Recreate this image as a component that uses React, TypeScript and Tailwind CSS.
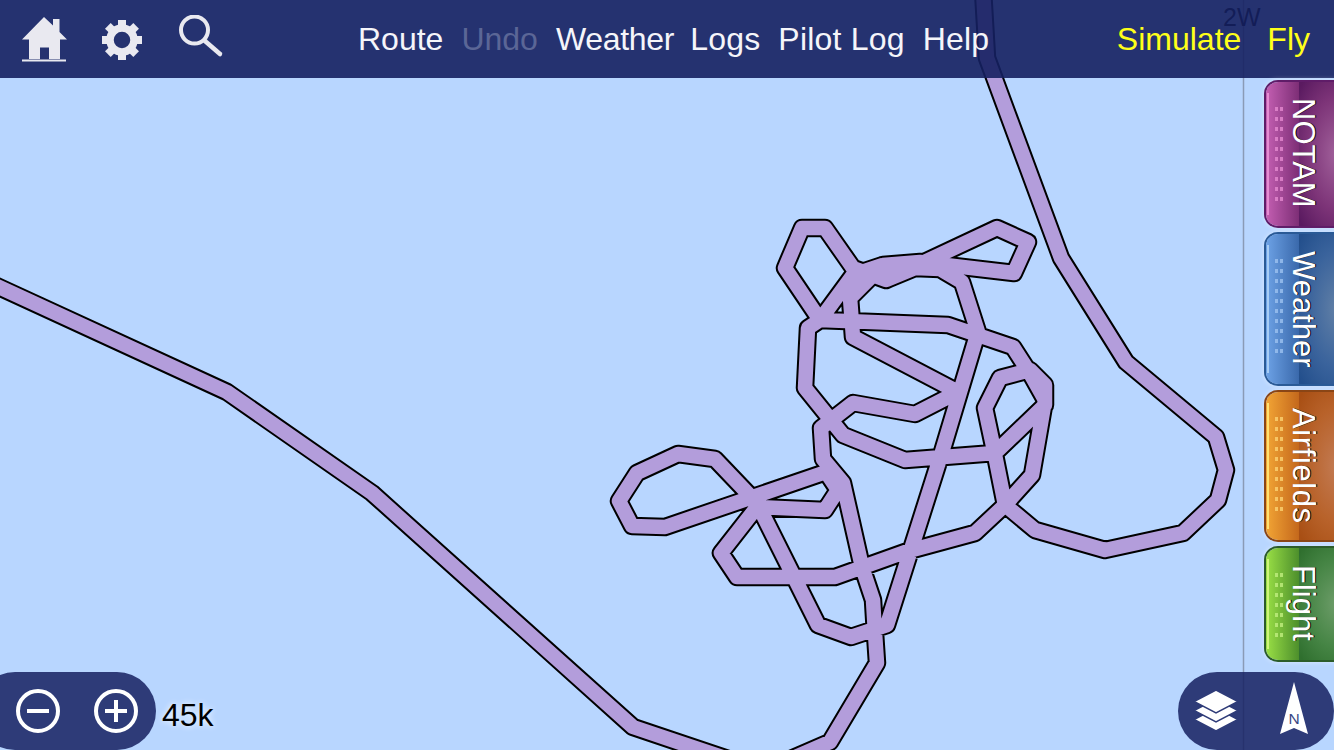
const routeD =
  "M-10 283 L227 392 L372 493 L633 727 L740 763 L770 768 L830 742 L877 663 L875 633 L873 600 L862 567 L843 483 L823 459 L821 428 L853 403 L915 414 L958 392 L853 337 L850 298 L883 265 L920 262 L1014 273 L1028 242 L997 228 L886 280 L853 268 L825 228 L802 228 L785 268 L820 320 L948 325 L1013 347 L1031 375 L1045 400 L1032 475 L1005 505 L975 533 L905 552 L835 577 L737 577 L721 553 L757 507 L825 510 L838 490 L826 472 L665 527 L632 526 L619 501 L637 473 L678 454 L715 459 L757 503 L818 625 L851 637 L887 625 L942 452 L978 332 L962 282 L940 269 L915 268 L886 280 " +
  "M820 320 L808 328 L805 388 L843 435 L905 460 L995 453 L1045 405 L1045 385 L1030 370 L1000 378 L985 408 L995 455 L1005 505 L1035 530 L1105 550 L1183 533 L1218 500 L1226 470 L1216 437 L1126 362 L1061 258 L987 58 L983 -10 M820 320 L853 275 L883 265";

const menu = [
  { label: "Route", cls: "text-[#f5f5fa]" },
  { label: "Undo", cls: "text-[#5b6696]" },
  { label: "Weather", cls: "-mr-[2px] tracking-[-0.3px] text-[#f5f5fa]" },
  { label: "Logs", cls: "tracking-[0.2px] text-[#f5f5fa]" },
  { label: "Pilot Log", cls: "tracking-[0.2px] text-[#f5f5fa]" },
  { label: "Help", cls: "tracking-[0.2px] text-[#f5f5fa]" },
];

const tabs = [
  {
    label: "NOTAM",
    h: "h-[148px]",
    rows: 10,
    text: "pb-[3px]",
    border: "border-[#5f1c68]",
    left: "bg-gradient-to-r from-[#c45fb2] to-[#7d2e76]",
    right: "bg-[radial-gradient(ellipse_at_right,#a0609a_0%,#7d3478_55%,#5a1a60_95%)]",
    strip: "bg-[#e58cd2]",
    dot: "bg-[#e58ad0]",
  },
  {
    label: "Weather",
    h: "h-[154px]",
    rows: 10,
    text: "",
    border: "border-[#2a5a96]",
    left: "bg-gradient-to-r from-[#6da2e6] to-[#3a69ab]",
    right: "bg-[radial-gradient(ellipse_at_right,#607fa6_0%,#3a639c_55%,#234f8c_95%)]",
    strip: "bg-[#a8cdf5]",
    dot: "bg-[#9cc2f0]",
  },
  {
    label: "Airfields",
    h: "h-[152px]",
    rows: 10,
    text: "tracking-[0.6px]",
    border: "border-[#8a4515]",
    left: "bg-gradient-to-r from-[#f2a535] to-[#c4681c]",
    right: "bg-[radial-gradient(ellipse_at_right,#c27a52_0%,#b8622a_55%,#a84f14_95%)]",
    strip: "bg-[#ffe070]",
    dot: "bg-[#fbd272]",
  },
  {
    label: "Flight",
    h: "h-[116px]",
    rows: 7,
    text: "pb-[3px]",
    border: "border-[#2c5c2a]",
    left: "bg-gradient-to-r from-[#9ae045] to-[#4d8f2c]",
    right: "bg-[radial-gradient(ellipse_at_right,#6c9c68_0%,#468545_55%,#2f6f2e_95%)]",
    strip: "bg-[#d0f57a]",
    dot: "bg-[#c0ee80]",
  },
];

function HomeIcon() {
  return (
    <svg width="46" height="46" viewBox="0 0 46 46" fill="#e9e9f0">
      <path d="M22 0 L31 8.5 V2 H37.5 V15 L45 22.5 H38 V42 H27 V30.5 H18 V42 H7 V22.5 H0 Z" />
      <rect x="0" y="42.5" width="44" height="2" />
    </svg>
  );
}

function GearIcon() {
  const teeth = [0, 45, 90, 135, 180, 225, 270, 315];
  return (
    <svg width="42" height="42" viewBox="-21 -21 42 42" fill="#e9e9f0">
      {teeth.map((a) => (
        <rect key={a} x="-4" y="-20" width="8" height="10" transform={`rotate(${a})`} />
      ))}
      <circle r="12" fill="none" stroke="#e9e9f0" strokeWidth="7.5" />
    </svg>
  );
}

function SearchIcon() {
  return (
    <svg width="46" height="46" viewBox="0 0 46 46" fill="none" stroke="#e9e9f0" strokeWidth="4" strokeLinecap="round">
      <circle cx="15.5" cy="15" r="13.5" />
      <path d="M26 26 L41 39" strokeWidth="4.5" />
    </svg>
  );
}

function ZoomIcon({ plus }: { plus?: boolean }) {
  return (
    <svg width="46" height="46" viewBox="0 0 46 46" fill="none" stroke="#ffffff" strokeWidth="4">
      <circle cx="23" cy="23" r="20" />
      <path d="M12 23 H34" />
      {plus && <path d="M23 12 V34" />}
    </svg>
  );
}

function LayersIcon() {
  return (
    <svg width="46" height="42" viewBox="0 0 46 42" fill="#ffffff" stroke="#2e3b78" strokeWidth="1.5">
      <path d="M23 18 L45 29.5 L23 41 L1 29.5 Z" />
      <path d="M23 9 L45 20.5 L23 32 L1 20.5 Z" />
      <path d="M23 0 L45 11.5 L23 23 L1 11.5 Z" />
    </svg>
  );
}

function NorthIcon() {
  return (
    <svg width="30" height="54" viewBox="0 0 30 54">
      <path d="M15 0 L29 52 L15 46 L1 52 Z" fill="#ffffff" />
      <text x="15" y="42" textAnchor="middle" fontSize="15.5" fill="#3a4784" fontFamily="Liberation Sans, sans-serif">
        N
      </text>
    </svg>
  );
}

function SideTab({ tab }: { tab: (typeof tabs)[number] }) {
  return (
    <div
      className={`relative flex w-[72px] overflow-hidden rounded-l-[14px] border-2 border-r-0 shadow-[0_0_5px_rgba(255,255,255,0.5)] ${tab.h} ${tab.border}`}
    >
      <div className={`flex w-[33px] gap-[3px] pl-px ${tab.left}`}>
        <div className={`my-[11px] w-[2px] ${tab.strip}`} />
        <div className="mt-[25px] ml-[3px] flex flex-col gap-[6px]">
          {Array.from({ length: tab.rows }).map((_, i) => (
            <div key={i} className="flex gap-[2px]">
              <span className={`h-[4px] w-[3px] opacity-80 ${tab.dot}`} />
              <span className={`h-[4px] w-[3px] opacity-80 ${tab.dot}`} />
            </div>
          ))}
        </div>
      </div>
      <div className={`flex-1 ${tab.right}`} />
      <div className="absolute inset-y-0 left-[20px] flex items-center">
        <span
          className={`text-[31px] leading-[34px] text-white [text-shadow:0_-1px_0_#000] [writing-mode:vertical-rl] ${tab.text}`}
        >
          {tab.label}
        </span>
      </div>
    </div>
  );
}

export default function App() {
  return (
    <div className="relative h-[750px] w-[1334px] overflow-hidden bg-[#b8d6ff] font-['Liberation_Sans',Arial,sans-serif]">
      {/* map */}
      <svg className="absolute inset-0" width="1334" height="750" viewBox="0 0 1334 750" fill="none">
        <line x1="1243.5" y1="0" x2="1243.5" y2="750" stroke="#8a9bb6" strokeWidth="1.5" />
        <text x="1223" y="26" fontSize="25" fill="#000000" fontFamily="Liberation Sans, sans-serif">
          2W
        </text>
        <path d={routeD} stroke="#000000" strokeWidth="18.5" strokeLinejoin="round" />
        <path d={routeD} stroke="#b39ddb" strokeWidth="14.5" strokeLinejoin="round" />
      </svg>

      {/* top bar */}
      <div className="absolute inset-x-0 top-0 flex h-[78px] items-center bg-[#152060]/90">
        <div className="mt-[2px] flex w-[358px] items-center pl-[22px]">
          <HomeIcon />
          <div className="ml-[33px]">
            <GearIcon />
          </div>
          <div className="mb-[4px] ml-[36px]">
            <SearchIcon />
          </div>
        </div>
        <div className="flex items-center gap-[18px] text-[32px]">
          {menu.map((m) => (
            <span key={m.label} className={m.cls}>
              {m.label}
            </span>
          ))}
        </div>
        <div className="ml-auto flex gap-[26px] pr-[24px] text-[32px] text-[#ffff19]">
          <span>Simulate</span>
          <span>Fly</span>
        </div>
      </div>

      {/* side tabs */}
      <div className="absolute top-[80px] right-[-2px] flex flex-col gap-[4px]">
        {tabs.map((t) => (
          <SideTab key={t.label} tab={t} />
        ))}
      </div>

      {/* zoom pill */}
      <div className="absolute bottom-0 left-[-24px] flex h-[78px] w-[180px] items-center gap-[32px] rounded-[39px] bg-[#152060]/85 pl-[39px]">
        <ZoomIcon />
        <ZoomIcon plus />
      </div>
      <span className="absolute top-[696px] left-[162px] text-[32px] leading-[38px] text-black [text-shadow:0_0_6px_#ffffff]">
        45k
      </span>

      {/* map controls */}
      <div className="absolute right-0 bottom-0 flex h-[78px] w-[156px] items-center rounded-[39px] bg-[#152060]/85 pl-[15px]">
        <LayersIcon />
        <div className="mb-[4px] ml-[40px]">
          <NorthIcon />
        </div>
      </div>
    </div>
  );
}
